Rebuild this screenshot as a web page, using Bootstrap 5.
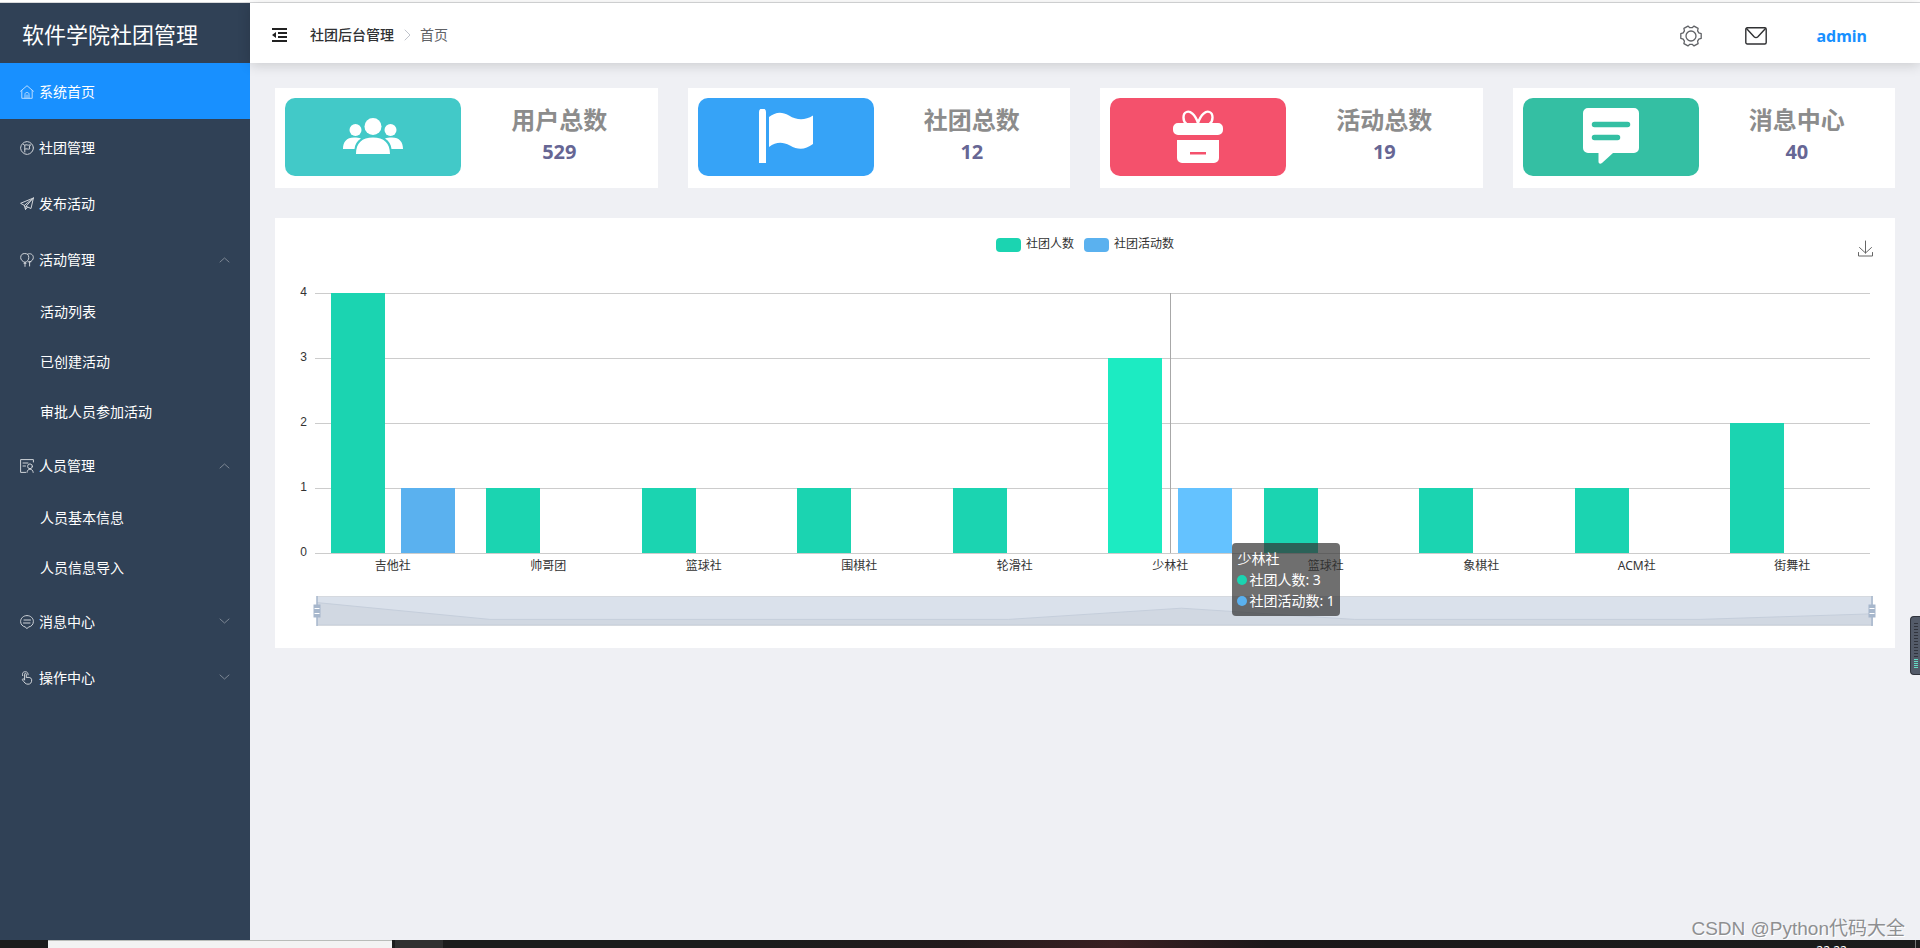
<!DOCTYPE html>
<html lang="zh-CN">
<head>
<meta charset="utf-8">
<meta name="viewport" content="width=device-width, initial-scale=1">
<title>软件学院社团管理</title>
<link href="https://cdn.jsdelivr.net/npm/bootstrap@5.3.0/dist/css/bootstrap.min.css" rel="stylesheet">
<style>
  body { font-family: "Noto Sans", "Noto Sans CJK SC", sans-serif; font-size: 14px; line-height: 20px; color: #303133; background: #eff0f4; }
  svg { display: block; flex: none; }
  .line-icon { fill: none; stroke: currentColor; stroke-linecap: round; stroke-linejoin: round; }
  .top-edge { height: 3px; background: #fff; border-bottom: 1px solid #d9dadc; }

  /* Sidebar */
  .side { width: 250px; background: #304156; }
  .brand { height: 60px; padding: 2px 0 0 22px; font-size: 22px; line-height: 32px; color: #fff; background: #304156; }
  .menu-item { height: 56px; padding: 1px 20px 0; gap: 5px; color: #fff; border: 0; background: none; text-decoration: none; }
  .menu-item .line-icon { color: #d0d4d9; }
  .menu-item.current { background: #1890ff; }
  .menu-item.current .line-icon { color: #b8dbff; }
  .menu-item .chev { color: #7d8794; }
  .menu-item[aria-expanded="true"] .chev { transform: rotate(180deg); }
  .sub-item { height: 50px; padding-left: 40px; color: #fff; text-decoration: none; }

  /* Header */
  .topbar { height: 60px; padding: 3px 53px 0 22px; background: #fff; box-shadow: 0 2px 12px rgba(0, 0, 0, .16); z-index: 2; }
  .icon-btn { border: 0; padding: 0; background: none; color: #303133; }
  .trail { margin-left: 22px; }
  .trail-root { color: #303133; font-weight: 500; text-decoration: none; }
  .trail-sep { color: #c0c4cc; }
  .trail-now { color: #606266; }
  .tools { gap: 43px; padding-top: 3px; }
  .user { color: #1890ff; font-size: 16px; font-weight: 700; text-decoration: none; margin-left: 7px; }

  /* Summary tiles */
  .content-pad { padding: 25px; }
  .tiles { display: grid; grid-template-columns: repeat(4, 1fr); gap: 30px; margin-bottom: 30px; }
  .tile { height: 100px; padding: 10px 0 0 10px; background: #fff; }
  .tile-icon { width: 47.3%; height: 78px; padding-bottom: 2px; border-radius: 10px; color: #fff; }
  .tile-title { font-size: 24px; line-height: 32px; font-weight: 700; color: #8c8c8c; margin-top: 6px; }
  .tile-num { font-size: 20px; line-height: 32px; font-weight: 700; color: #666694; }
  .c-teal { background: #42c9c8; } .c-blue { background: #36a3f7; } .c-red { background: #f4516c; } .c-green { background: #34bfa3; }

  /* Chart */
  .panel { background: #fff; padding: 17px 22px 22px 24px; font-size: 12px; line-height: 18px; color: #333; }
  .legend-row { height: 24px; gap: 10px; padding-right: 2px; }
  .legend-key { gap: 5px; height: 18px; }
  .swatch { width: 25px; height: 14px; margin-top: 2px; border-radius: 4px; }
  .s1 { background: #1bd4b1; } .s2 { background: #5ab1ef; }
  .hot .s1 { background: #1cebc2; } .hot .s2 { background: #64c2ff; }
  .save { right: 0; top: 5px; color: #666; }
  .plot-row { margin-top: 34px; gap: 8px; padding-right: 3px; }
  .scale { width: 8px; height: 278px; margin: -10px 0 -7px; font-family: "Liberation Sans", sans-serif; text-align: right; }
  .plot { height: 261px; background: repeating-linear-gradient(#ccc 0 1px, #fff 1px 65px); }
  .slot { width: 10%; height: 260px; padding: 0 1%; gap: 16px; }
  .bar { flex: 1 1 0; }
  .cross { left: 55%; width: 1px; top: 0; height: 260px; background: #a8a8a8; }
  .names { margin-top: 3px; padding: 0 3px 0 16px; height: 18px; text-align: center; }
  .tip { left: 59%; top: 250px; z-index: 3; padding: 5px; border-radius: 4px; background: rgba(50, 50, 50, .7); color: #fff; font-size: 14px; line-height: 21px; white-space: nowrap; }
  .dot { width: 10px; height: 10px; border-radius: 50%; margin-right: 2px; }
  .zoom-strip { margin: 21px 0 0 18px; height: 30px; background: #dae1eb; border: solid #d5d9df; border-width: 1px 0; }
  .trend-area { width: 100%; height: 100%; }
  .grip { top: -1px; width: 12px; height: 30px; }
  .grip-l { left: -6px; } .grip-r { right: -5px; }

  /* Screen edges */
  .meter-box { right: 0; top: 616px; width: 10px; height: 59px; border: solid #2f333c; border-width: 1px 0 1px 1px; border-radius: 4px 0 0 4px; background: #535b69; padding: 6px 2px 0 3px; z-index: 4; }
  .meter-off { height: 36px; background: repeating-linear-gradient(#30343d 0 1px, #535b69 1px 3px); }
  .meter-on { height: 9px; background: repeating-linear-gradient(#63dcc4 0 1px, #535b69 1px 2px); }
  .stamp { right: 15px; bottom: 6px; font-family: "Liberation Sans", "Noto Sans CJK SC", sans-serif; font-size: 19px; line-height: 26px; color: #8e8f91; text-shadow: 1px 1px 0 #fff; z-index: 3; }
  .taskbar { height: 8px; background: linear-gradient(90deg, #1c1c1c 0 40%, #231a1c 50%, #3a1f22 58%, #1c1719 66%, #1c1c1c); }
  .task-blank { width: 48px; }
  .task-search { width: 344px; background: #f3f3f3; border-top: 1px solid #b9bcb9; }
  .task-app { width: 48px; margin-left: 3px; background: #303030; }
  .clock { font-size: 12px; line-height: 18px; padding: 2px 68px 0 0; color: #fff; }
  .desk-end { width: 5px; border-left: 1px solid #777; }
</style>
</head>
<body>
<div class="d-flex flex-column min-vh-100 position-relative overflow-hidden">
  <div class="top-edge"></div>
  <div class="d-flex flex-grow-1">
    <aside class="side flex-shrink-0">
      <div class="brand d-flex align-items-center">软件学院社团管理</div>
      <nav class="d-flex flex-column">
        <a class="menu-item current d-flex align-items-center" href="#">
          <svg class="line-icon" width="14" height="14" viewBox="0 0 14 14"><path d="M.6 6.200 7 .7l6.400 5.500M1.800 5.400v7.900h10.400V5.400M5 13.200V9.300C5 8 5.800 7.500 7 7.500S9 8 9 9.300v3.900M7 10v3"/></svg>
          <span>系统首页</span>
        </a>
        <a class="menu-item d-flex align-items-center" href="#">
          <svg class="line-icon" width="14" height="14" viewBox="0 0 14 14"><circle cx="7" cy="7" r="6.400" stroke-dasharray="9 1"/><path d="M4.800 11V4.200c1.500-1.300 2.800.8 5.700-.4L9.300 6l.4 1.900c-1.800.8-3-.8-4.900.2M3.500 3.500l1.300.8"/></svg>
          <span>社团管理</span>
        </a>
        <a class="menu-item d-flex align-items-center" href="#">
          <svg class="line-icon" width="14" height="14" viewBox="0 0 14 14"><path d="M13.400 1 .6 6.300 4.300 8.400 13.400 1 6 9.300l5 2.200L13.400 1M4.300 8.400l1.200 4.100L6 9.300M5.500 12.500l2-2.300"/></svg>
          <span>发布活动</span>
        </a>
        <button class="menu-item d-flex align-items-center" type="button" data-bs-toggle="collapse" data-bs-target="#sub-activity" aria-expanded="true">
          <svg class="line-icon" width="14" height="14" viewBox="0 0 14 14"><path d="M5 9.400C2.200 8.500.7 6.600.7 4.600a4 4 0 0 1 8.100 0c0 2.200-1.400 4-3.800 4.800zM4 10.300h2M5 10v3.400M7.500 1.200c2.900-1.500 5.800.4 5.800 3.200 0 2.300-1.400 3.700-3.500 4.500M8 8.800h2.800M9.600 9v4"/></svg>
          <span class="me-auto">活动管理</span>
          <svg class="line-icon chev" width="12" height="12" viewBox="0 0 12 12"><path d="m1 4 4.500 4L10 4"/></svg>
        </button>
        <div class="collapse show" id="sub-activity">
          <a class="sub-item d-flex align-items-center" href="#">活动列表</a>
          <a class="sub-item d-flex align-items-center" href="#">已创建活动</a>
          <a class="sub-item d-flex align-items-center" href="#">审批人员参加活动</a>
        </div>
        <button class="menu-item d-flex align-items-center" type="button" data-bs-toggle="collapse" data-bs-target="#sub-people" aria-expanded="true">
          <svg class="line-icon" width="14" height="14" viewBox="0 0 14 14"><path d="M13.400 3V.6H.6v12.800h5M3 4h5M3 7h2.500M7 13.400c.2-2 1.300-3.200 3-3.200s3 1.200 3.200 3.200"/><circle cx="10" cy="7.300" r="2.400"/></svg>
          <span class="me-auto">人员管理</span>
          <svg class="line-icon chev" width="12" height="12" viewBox="0 0 12 12"><path d="m1 4 4.500 4L10 4"/></svg>
        </button>
        <div class="collapse show" id="sub-people">
          <a class="sub-item d-flex align-items-center" href="#">人员基本信息</a>
          <a class="sub-item d-flex align-items-center" href="#">人员信息导入</a>
        </div>
        <button class="menu-item d-flex align-items-center" type="button" aria-expanded="false">
          <svg class="line-icon" width="14" height="14" viewBox="0 0 14 14"><path d="M5.200 12A6 6 0 0 1 .6 6.500C.6 3.200 3.400.6 7 .6s6.400 2.600 6.400 5.900A6 6 0 0 1 8.800 12L7 13.400zM4 5h6.500M3.500 8H10"/></svg>
          <span class="me-auto">消息中心</span>
          <svg class="line-icon chev" width="12" height="12" viewBox="0 0 12 12"><path d="m2 3 4.500 4L11 3"/></svg>
        </button>
        <button class="menu-item d-flex align-items-center" type="button" aria-expanded="false">
          <svg class="line-icon" width="14" height="14" viewBox="0 0 14 14"><path d="M4.600 8.800V3.200c0-1.200 1.700-1.200 1.700 0v3.300c2.200-.4 5.400 0 5.400 2.300 0 3-1.300 4.400-3.700 4.400-2.600 0-3.500-1.700-5.500-4.200-.6-1 .8-1.600 1.400-.9zM2.600 4.600C1.700 1.300 4 .6 5.400.7c1.800 0 3 1.500 2.700 3.200"/></svg>
          <span class="me-auto">操作中心</span>
          <svg class="line-icon chev" width="12" height="12" viewBox="0 0 12 12"><path d="m2 3 4.500 4L11 3"/></svg>
        </button>
      </nav>
    </aside>

    <div class="flex-grow-1 d-flex flex-column">
      <header class="topbar d-flex align-items-center position-relative">
        <button class="icon-btn" type="button" aria-label="折叠菜单">
          <svg width="16" height="14" viewBox="0 0 16 14" fill="#222"><path d="M0 0h15v2H0zM6 4h9v2H6zM6 8h9v2H6zM0 12h15v2H0zM0 7l4-3v6z"/></svg>
        </button>
        <nav class="trail d-flex align-items-center me-auto">
          <a class="trail-root" href="#">社团后台管理</a>
          <svg class="line-icon trail-sep mx-2" width="10" height="12" viewBox="0 0 10 12"><path d="m3 1 5 5-5 5"/></svg>
          <span class="trail-now">首页</span>
        </nav>
        <div class="tools d-flex align-items-center">
          <button class="icon-btn" type="button" aria-label="设置">
            <svg class="line-icon" width="22" height="22" viewBox="0 0 22 22" stroke-width="1.300" color="#606266"><circle cx="11" cy="11" r="5"/><path d="M18.800 7.800 21.200 8.700V13.300L18.800 14.200 17.600 16.200 18.100 18.600 14 20.900 12.200 19.300H9.800L8 20.900 3.900 18.600 4.400 16.200 3.200 14.200.8 13.300V8.700L3.200 7.800 4.400 5.800 3.900 3.400 8 1.100 9.800 2.700h2.400L14 1.100l4.100 2.300-.5 2.400z"/></svg>
          </button>
          <button class="icon-btn" type="button" aria-label="消息">
            <svg class="line-icon" width="22" height="18" viewBox="0 0 22 18" stroke-width="1.400"><rect x=".8" y=".8" width="20.400" height="16.200" rx="1.500"/><path d="m1.500 1.500 7.600 8.200c1.200 1.200 2.600 1.200 3.800 0l7.600-8.200"/></svg>
          </button>
          <a class="user" href="#">admin</a>
        </div>
      </header>

      <main class="content-pad">
        <section class="tiles">
          <div class="tile d-flex">
            <div class="tile-icon c-teal d-flex align-items-center justify-content-center">
              <svg width="60" height="36" viewBox="0 0 60 36" fill="currentColor"><circle cx="30" cy="8.500" r="8.500"/><circle cx="12.500" cy="12" r="6"/><circle cx="47.500" cy="12" r="6"/><path d="M13 36c0-11 6-16.500 17-16.500S47 25 47 36zM0 31c0-7 3.500-11.500 11-11.500 3 0 5 .3 7 1-4 2.300-6 6-6.500 10.500zM60 31c0-7-3.500-11.500-11-11.500-3 0-5 .3-7 1 4 2.300 6 6 6.500 10.500z"/></svg>
            </div>
            <div class="flex-grow-1 text-center"><div class="tile-title">用户总数</div><div class="tile-num">529</div></div>
          </div>
          <div class="tile d-flex">
            <div class="tile-icon c-blue d-flex align-items-center justify-content-center">
              <svg width="54" height="54" viewBox="0 0 54 54" fill="currentColor"><path d="M0 54V3a3.300 3.300 0 0 1 7 0v51zM10 8c6-4.500 12-6 20-1.500 8 5 16 5 24 0V35c-8 6-15 6-23 1.500-8-4-14-3.500-21 1.500z"/></svg>
            </div>
            <div class="flex-grow-1 text-center"><div class="tile-title">社团总数</div><div class="tile-num">12</div></div>
          </div>
          <div class="tile d-flex">
            <div class="tile-icon c-red d-flex align-items-center justify-content-center">
              <svg width="52" height="54" viewBox="0 0 52 54"><g fill="none" stroke="currentColor" stroke-width="2.400"><path d="M26 14C23 5 18 1.500 14.500 3c-4 1.500-4 9 0 12M26 14c3-9 8-12.500 11.500-11 4 1.500 4 9 0 12"/></g><path fill="currentColor" d="M6 14h40a5 5 0 0 1 5 5v2a5 5 0 0 1-5 5H6a5 5 0 0 1-5-5v-2a5 5 0 0 1 5-5zM5 31h42v18a5 5 0 0 1-5 5H10a5 5 0 0 1-5-5z"/><path fill="#f4516c" d="M18 43h16v2.500H18z"/></svg>
            </div>
            <div class="flex-grow-1 text-center"><div class="tile-title">活动总数</div><div class="tile-num">19</div></div>
          </div>
          <div class="tile d-flex">
            <div class="tile-icon c-green d-flex align-items-center justify-content-center">
              <svg width="56" height="58" viewBox="0 0 56 58"><path fill="currentColor" d="M5 1h46a5 5 0 0 1 5 5v35a5 5 0 0 1-5 5H30L19 56c-2 1.500-3.500.5-3.500-1.500V46H5a5 5 0 0 1-5-5V6a5 5 0 0 1 5-5z"/><path stroke="#34bfa3" stroke-width="5.500" stroke-linecap="round" d="M11.500 17.500h33M11.500 30.500h23"/></svg>
            </div>
            <div class="flex-grow-1 text-center"><div class="tile-title">消息中心</div><div class="tile-num">40</div></div>
          </div>
        </section>

        <section class="panel">
          <div class="legend-row d-flex justify-content-center position-relative">
            <div class="legend-key d-flex align-items-center"><span class="swatch s1"></span>社团人数</div>
            <div class="legend-key d-flex align-items-center"><span class="swatch s2"></span>社团活动数</div>
            <button class="icon-btn save position-absolute" type="button" aria-label="保存为图片">
              <svg class="line-icon" width="15" height="17" viewBox="0 0 15 17"><path d="M7.500 1v12M1.500 7.500l6 5.500 6-5.500M.5 12.500v3.500h14v-3.500"/></svg>
            </button>
          </div>
          <div class="plot-row d-flex">
            <div class="scale d-flex flex-column justify-content-between"><span>4</span><span>3</span><span>2</span><span>1</span><span>0</span></div>
            <div class="plot flex-grow-1 position-relative">
              <div class="d-flex w-100">
                <div class="slot d-flex align-items-end"><div class="bar s1 h-100"></div><div class="bar s2 h-25"></div></div>
                <div class="slot d-flex align-items-end"><div class="bar s1 h-25"></div><div class="bar"></div></div>
                <div class="slot d-flex align-items-end"><div class="bar s1 h-25"></div><div class="bar"></div></div>
                <div class="slot d-flex align-items-end"><div class="bar s1 h-25"></div><div class="bar"></div></div>
                <div class="slot d-flex align-items-end"><div class="bar s1 h-25"></div><div class="bar"></div></div>
                <div class="slot hot d-flex align-items-end"><div class="bar s1 h-75"></div><div class="bar s2 h-25"></div></div>
                <div class="slot d-flex align-items-end"><div class="bar s1 h-25"></div><div class="bar"></div></div>
                <div class="slot d-flex align-items-end"><div class="bar s1 h-25"></div><div class="bar"></div></div>
                <div class="slot d-flex align-items-end"><div class="bar s1 h-25"></div><div class="bar"></div></div>
                <div class="slot d-flex align-items-end"><div class="bar s1 h-50"></div><div class="bar"></div></div>
              </div>
              <div class="cross position-absolute"></div>
              <div class="tip position-absolute">
                <div>少林社</div>
                <div class="d-flex align-items-center"><span class="dot s1"></span>社团人数: 3</div>
                <div class="d-flex align-items-center"><span class="dot s2"></span>社团活动数: 1</div>
              </div>
            </div>
          </div>
          <div class="names d-flex">
            <span class="col">吉他社</span><span class="col">帅哥团</span><span class="col">篮球社</span><span class="col">围棋社</span><span class="col">轮滑社</span>
            <span class="col">少林社</span><span class="col">篮球社</span><span class="col">象棋社</span><span class="col">ACM社</span><span class="col">街舞社</span>
          </div>
          <div class="zoom-strip position-relative">
            <svg class="trend-area" viewBox="0 0 9 5" preserveAspectRatio="none"><path d="M0 5V1L1 4H4L5 2 6 4H8L9 3V5z" fill="#d1d8e2" stroke="#c5cedb" vector-effect="non-scaling-stroke"/></svg>
            <svg class="grip grip-l position-absolute" viewBox="0 0 12 30"><path d="M6 0v30" stroke="#a7b7cc" stroke-width="1.500"/><path fill="#a7b7cc" d="M2.500 8.500h7v13h-7z"/><path stroke="#fff" d="M3.500 12.500h5M3.500 17.500h5"/></svg>
            <svg class="grip grip-r position-absolute" viewBox="0 0 12 30"><path d="M6 0v30" stroke="#a7b7cc" stroke-width="1.500"/><path fill="#a7b7cc" d="M2.500 8.500h7v13h-7z"/><path stroke="#fff" d="M3.500 12.500h5M3.500 17.500h5"/></svg>
          </div>
        </section>
      </main>
    </div>
  </div>

  <footer class="taskbar d-flex overflow-hidden">
    <div class="task-blank"></div><div class="task-search"></div><div class="task-app me-auto"></div>
    <span class="clock">22:22</span><div class="desk-end"></div>
  </footer>
  <div class="stamp position-absolute">CSDN @Python代码大全</div>
  <div class="meter-box position-absolute"><div class="meter-off"></div><div class="meter-on"></div></div>
</div>

<script src="https://cdn.jsdelivr.net/npm/bootstrap@5.3.0/dist/js/bootstrap.bundle.min.js"></script>
</body>
</html>
